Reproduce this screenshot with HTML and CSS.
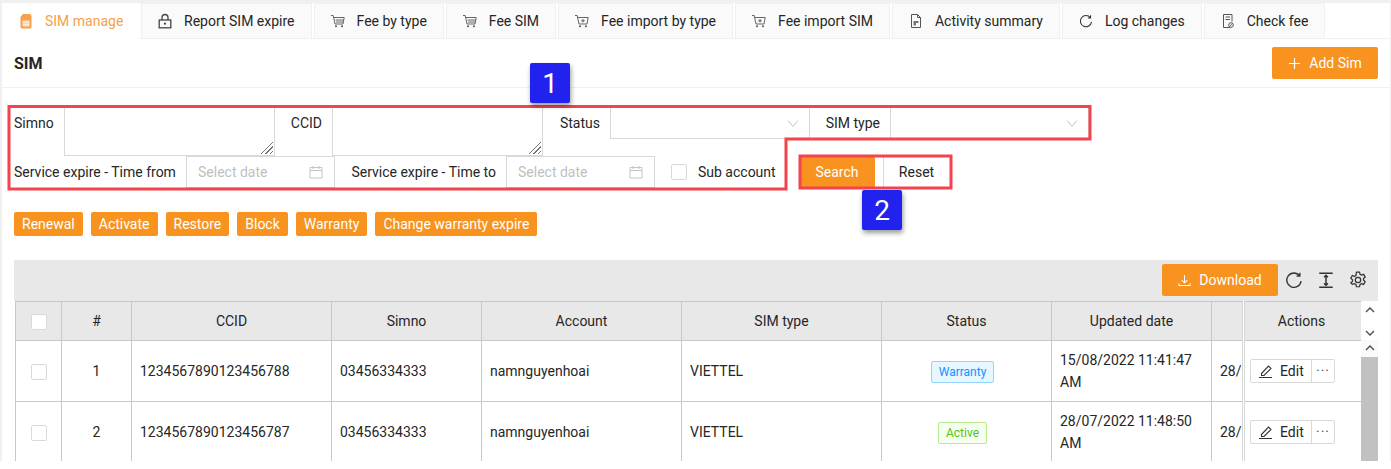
FILE: index.html
```html
<!DOCTYPE html>
<html lang="en">
<head>
    <meta charset="UTF-8">
    <title>SIM manage</title>
    <link rel="stylesheet" href="styles.css">
</head>
<body>
    <div class="page">
        <div class="tabs">
            <div class="tab active">
                <svg class="tab-icon" viewBox="0 0 14 16"><path d="M4 1h6.500a2 2 0 0 1 2 2v11a1.500 1.500 0 0 1-1.500 1.500H3A1.500 1.500 0 0 1 1.500 14V4z" fill="#f7a04a"/><path d="M4 8h6v5H4zM4 9.700h6M4 11.300h6M6 8v5M8 8v5" fill="none" stroke="#fff" stroke-width=".8"/></svg>
                SIM manage
            </div>
            <div class="tab">
                <svg class="tab-icon" viewBox="0 0 14 16"><path d="M4 7V4.500a3 3 0 0 1 6 0V7" fill="none" stroke="#444" stroke-width="1.300"/><rect x="1.200" y="7" width="11.600" height="7.800" fill="none" stroke="#444" stroke-width="1.300"/><circle cx="7" cy="10.700" r="1.100" fill="#444"/></svg>
                Report SIM expire
            </div>
            <div class="tab">
                <svg class="tab-icon" viewBox="0 0 14 16"><use href="#cart"/></svg>
                Fee by type
            </div>
            <div class="tab">
                <svg class="tab-icon" viewBox="0 0 14 16"><use href="#cart"/></svg>
                Fee SIM
            </div>
            <div class="tab">
                <svg class="tab-icon" viewBox="0 0 14 16"><use href="#cart-plus"/></svg>
                Fee import by type
            </div>
            <div class="tab">
                <svg class="tab-icon" viewBox="0 0 14 16"><use href="#cart-plus"/></svg>
                Fee import SIM
            </div>
            <div class="tab">
                <svg class="tab-icon" viewBox="0 0 14 16"><path d="M2.500 1.500h6l3 3v10h-9z" fill="none" stroke="#555" stroke-width="1"/><path d="M8.500 1.500v3h3" fill="none" stroke="#555"/><path d="M4.500 8h5v2h-2.500v2.500h-2.500z" fill="#777"/></svg>
                Activity summary
            </div>
            <div class="tab">
                <svg class="tab-icon" viewBox="0 0 16 16"><use href="#refresh"/></svg>
                Log changes
            </div>
            <div class="tab">
                <svg class="tab-icon" viewBox="0 0 14 16"><path d="M9 14.500H2.500v-13h8.500v7" fill="none" stroke="#555"/><path d="M4.500 4h4.500M4.500 6.500h4.500" stroke="#555"/><circle cx="10" cy="12" r="2.300" fill="none" stroke="#555"/><path d="M8.500 13.500l3-3" stroke="#555" stroke-width=".8"/></svg>
                Check fee
            </div>
        </div>

        <div class="title-bar">
            <h1 class="title">SIM</h1>
            <button class="btn btn-add">
                <svg class="btn-icon" viewBox="0 0 14 14"><path d="M7 1v12M1 7h12" stroke="#fff" stroke-width="1.300"/></svg>
                Add Sim
            </button>
        </div>

        <div class="filters">
            <div class="filter-row first">
                <label class="lbl lbl-simno">Simno</label>
                <div class="textarea"><span class="grip"></span></div>
                <label class="lbl lbl-ccid">CCID</label>
                <div class="textarea"><span class="grip"></span></div>
                <label class="lbl lbl-status">Status</label>
                <div class="select select-status"><svg class="chev" viewBox="0 0 12 12"><path d="M1 3.500l5 6 5-6" fill="none" stroke="#c4c4c4"/></svg></div>
                <label class="lbl lbl-type">SIM type</label>
                <div class="select select-type"><svg class="chev" viewBox="0 0 12 12"><path d="M1 3.500l5 6 5-6" fill="none" stroke="#c4c4c4"/></svg></div>
            </div>
            <div class="filter-row second">
                <label class="lbl lbl-from">Service expire - Time from</label>
                <div class="date">Select date <svg class="cal" viewBox="0 0 14 14"><path d="M1 2.500h12v10.500H1zM1 5.500h12M4 1v3M10 1v3" fill="none" stroke="#c4c4c4"/></svg></div>
                <label class="lbl lbl-to">Service expire - Time to</label>
                <div class="date">Select date <svg class="cal" viewBox="0 0 14 14"><path d="M1 2.500h12v10.500H1zM1 5.500h12M4 1v3M10 1v3" fill="none" stroke="#c4c4c4"/></svg></div>
                <span class="check sub-check"></span>
                <label class="lbl lbl-sub">Sub account</label>
                <button class="search">Search</button>
                <button class="reset">Reset</button>
            </div>
        </div>

        <div class="actions">
            <button class="btn-small">Renewal</button>
            <button class="btn-small">Activate</button>
            <button class="btn-small">Restore</button>
            <button class="btn-small">Block</button>
            <button class="btn-small">Warranty</button>
            <button class="btn-small">Change warranty expire</button>
        </div>

        <div class="grid">
            <div class="toolbar">
                <button class="btn btn-download">
                    <svg class="btn-icon" viewBox="0 0 14 14"><path d="M7 1v8M4 6.500L7 9.500l3-3M1 10v2.500h12V10" fill="none" stroke="#fff" stroke-width="1.100"/></svg>
                    Download
                </button>
                <svg class="tool" viewBox="0 0 16 16"><use href="#refresh"/></svg>
                <svg class="tool" viewBox="0 0 16 16"><path d="M2 2h12M2 14.500h12M8 4v8.500M6.300 5.500L8 3.800l1.700 1.700M6.300 11L8 12.700 9.700 11" fill="none" stroke="#333" stroke-width="1.300"/></svg>
                <svg class="tool" viewBox="0 0 16 16"><path d="M6.600 1h2.800l.4 2 1.300.7 1.900-.7 1.400 2.400-1.500 1.300v1.500l1.500 1.300-1.400 2.400-1.900-.7-1.300.8-.4 2H6.600l-.4-2-1.300-.8-1.900.7L1.600 10.500l1.500-1.300V7.700L1.600 6.400 3 4l1.900.7 1.300-.7z" fill="none" stroke="#333" stroke-width="1.100"/><circle cx="8" cy="8" r="2.400" fill="none" stroke="#333" stroke-width="1.100"/></svg>
            </div>
            <div class="table-wrap">
                <table class="table">
                    <colgroup>
                        <col class="c-check"><col class="c-num"><col class="c-ccid"><col class="c-simno"><col class="c-account"><col class="c-type"><col class="c-status"><col class="c-updated"><col class="c-extra"><col class="c-actions">
                    </colgroup>
                    <thead>
                        <tr>
                            <th><span class="check white"></span></th>
                            <th>#</th>
                            <th>CCID</th>
                            <th>Simno</th>
                            <th>Account</th>
                            <th>SIM type</th>
                            <th>Status</th>
                            <th>Updated date</th>
                            <th></th>
                            <th class="fixed">Actions</th>
                        </tr>
                    </thead>
                    <tbody>
                        <tr>
                            <td class="center"><span class="check"></span></td>
                            <td class="center">1</td>
                            <td>1234567890123456788</td>
                            <td>03456334333</td>
                            <td>namnguyenhoai</td>
                            <td>VIETTEL</td>
                            <td class="center"><span class="tag tag-blue">Warranty</span></td>
                            <td>15/08/2022 11:41:47 AM</td>
                            <td class="clip">28/</td>
                            <td class="fixed"><div class="row-btns"><span class="edit"><svg class="edit-icon" viewBox="0 0 14 14"><path d="M2.500 9.500L9.500 2l2.500 2.500L5 11.500H2.500zM0 13.500h13" fill="none" stroke="#333" stroke-width="1.100"/></svg>Edit</span><span class="more">···</span></div></td>
                        </tr>
                        <tr>
                            <td class="center"><span class="check"></span></td>
                            <td class="center">2</td>
                            <td>1234567890123456787</td>
                            <td>03456334333</td>
                            <td>namnguyenhoai</td>
                            <td>VIETTEL</td>
                            <td class="center"><span class="tag tag-green">Active</span></td>
                            <td>28/07/2022 11:48:50 AM</td>
                            <td class="clip">28/</td>
                            <td class="fixed"><div class="row-btns"><span class="edit"><svg class="edit-icon" viewBox="0 0 14 14"><path d="M2.500 9.500L9.500 2l2.500 2.500L5 11.500H2.500zM0 13.500h13" fill="none" stroke="#333" stroke-width="1.100"/></svg>Edit</span><span class="more">···</span></div></td>
                        </tr>
                    </tbody>
                </table>
                <div class="scroll">
                    <div class="scroll-head">
                        <svg class="arrow" viewBox="0 0 10 6"><path d="M1 5l4-4 4 4" fill="none" stroke="#555" stroke-width="1.500"/></svg>
                        <svg class="arrow" viewBox="0 0 10 6"><path d="M1 1l4 4 4-4" fill="none" stroke="#555" stroke-width="1.500"/></svg>
                    </div>
                    <div class="scroll-up"><svg class="arrow" viewBox="0 0 10 6"><path d="M1 5l4-4 4 4" fill="none" stroke="#555" stroke-width="1.500"/></svg></div>
                    <div class="scroll-thumb"></div>
                </div>
            </div>
        </div>
    </div>

    <!-- annotations drawn on top of the screenshot -->
    <svg class="notes" viewBox="0 0 1391 469">
        <path d="M9 106.500H1090V139H786V189H9z" fill="none" stroke="#f4434c" stroke-width="3"/>
        <rect x="800" y="156" width="151" height="32" fill="none" stroke="#f4434c" stroke-width="3"/>
    </svg>
    <div class="badge badge-one">1</div>
    <div class="badge badge-two">2</div>

    <svg class="defs" width="0" height="0">
        <defs>
            <g id="cart"><path d="M0 2.500h2.200l1.800 8.500h8l1.200-6.500H2.800M4.500 7h8M5 9h7" fill="none" stroke="#555" stroke-width=".9"/><circle cx="5" cy="13.300" r="1" fill="#555"/><circle cx="11" cy="13.300" r="1" fill="#555"/></g>
            <g id="cart-plus"><path d="M0 2.500h2.200l1.800 8.500h8l1.200-6.500H2.800M8 6v3.500M6.200 7.800h3.600" fill="none" stroke="#555" stroke-width=".9"/><circle cx="5" cy="13.300" r="1" fill="#555"/><circle cx="11" cy="13.300" r="1" fill="#555"/></g>
            <path id="refresh" d="M13 4.200A6.400 6.400 0 1 0 14.300 9M13.200 1.500v3h-3" fill="none" stroke="#333" stroke-width="1.200"/>
        </defs>
    </svg>
</body>
</html>
```

FILE: styles.css
```css
* {
    box-sizing: border-box;
}
html {
    margin: 0;
    height: 100%;
    overflow: hidden;
    background: #fff;
}
body {
    position: relative;
    margin: 0;
    height: 461px;
    background: #f0f0f0;
    padding: 3px 1px 0 2px;
    font-family: Roboto, "Liberation Sans", sans-serif;
    font-size: 14px;
    color: #262626;
}
.page {
    height: 100%;
    background: #fff;
}
button {
    font: inherit;
    border: 0;
    padding: 0;
    cursor: pointer;
}

/* tabs */
.tabs {
    display: flex;
    gap: 2px;
    height: 36px;
    border-bottom: 1px solid #f0f0f0;
}
.tab {
    display: flex;
    align-items: center;
    gap: 12px;
    height: 35px;
    padding: 0 16px;
    background: #fafafa;
    border: 1px solid #f0f0f0;
    border-bottom: 0;
    white-space: nowrap;
}
.tab.active {
    height: 36px;
    width: 137px;
    padding: 0 0 1px 16px;
    background: #fff;
    border-color: #fff;
    color: #f7a04a;
}
.tab-icon {
    width: 14px;
    height: 16px;
    flex: none;
}

/* title */
.title-bar {
    display: flex;
    justify-content: space-between;
    align-items: center;
    height: 49px;
    padding: 0 12px;
    border-bottom: 1px solid #f0f0f0;
}
.title {
    margin: 0;
    font-size: 16px;
    font-weight: 700;
}
.btn {
    display: flex;
    align-items: center;
    justify-content: center;
    gap: 8px;
    height: 32px;
    background: #f7931e;
    color: #fff;
    border-radius: 2px;
}
.btn-add {
    width: 106px;
}
.btn-download {
    width: 116px;
}
.btn-icon {
    width: 13px;
    height: 13px;
}

/* search form */
.filters {
    padding: 20px 0 0 12px;
    height: 124px;
}
.filter-row {
    display: flex;
}
.filter-row.first {
    height: 48px;
    align-items: flex-start;
}
.filter-row.second {
    height: 32px;
    align-items: stretch;
}
.lbl {
    white-space: nowrap;
    flex: none;
}
.first .lbl {
    line-height: 31px;
}
.second .lbl {
    line-height: 32px;
}
.lbl-simno { width: 50px; }
.lbl-ccid { width: 57px; text-align: right; padding-right: 10px; }
.lbl-status { width: 67px; text-align: right; padding-right: 10px; }
.lbl-type { width: 80px; text-align: right; padding-right: 10px; }
.lbl-from { width: 172px; }
.lbl-to { width: 171px; text-align: right; padding-right: 10px; }
.lbl-sub { width: 88px; padding-left: 11px; }
.textarea {
    position: relative;
    width: 211px;
    height: 48px;
    border: 1px solid #d9d9d9;
    border-top: 0;
}
.grip {
    position: absolute;
    right: 1px;
    bottom: 1px;
    width: 14px;
    height: 14px;
    background: repeating-linear-gradient(135deg, transparent 0 2px, #777 2px 3px);
    clip-path: polygon(100% 0, 100% 100%, 0 100%);
}
.select {
    position: relative;
    height: 31px;
    border: 1px solid #d9d9d9;
    border-top: 0;
}
.select-status { width: 200px; }
.select-type { width: 199px; }
.chev {
    position: absolute;
    right: 10px;
    top: 9px;
    width: 12px;
    height: 12px;
}
.date {
    display: flex;
    align-items: center;
    justify-content: space-between;
    width: 149px;
    padding: 0 11px;
    border: 1px solid #d9d9d9;
    color: #bfbfbf;
}
.cal {
    width: 14px;
    height: 14px;
}
.check {
    display: inline-block;
    width: 16px;
    height: 16px;
    background: #fff;
    border: 1px solid #d9d9d9;
    border-radius: 2px;
    vertical-align: middle;
}
.sub-check {
    align-self: center;
    margin-left: 16px;
}
.search {
    width: 74px;
    margin-left: 26px;
    padding-right: 2px;
    background: #f7931e;
    color: #fff;
    height: 30px;
    align-self: center;
}
.reset {
    width: 66px;
    margin-left: 8px;
    background: #fff;
    color: #262626;
    border-left: 1px solid #d9d9d9;
    height: 30px;
    align-self: center;
}

/* bulk buttons */
.actions {
    display: flex;
    gap: 8px;
    height: 48px;
    padding-left: 12px;
}
.btn-small {
    height: 24px;
    padding: 0 8px;
    background: #f7931e;
    color: #fff;
    border-radius: 2px;
}

/* table */
.grid {
    margin: 0 12px;
}
.toolbar {
    display: flex;
    align-items: center;
    justify-content: flex-end;
    height: 41px;
    padding: 0 4px 1px 0;
    background: #e8e8e8;
}
.tool {
    width: 18px;
    height: 18px;
    margin: 0 7px;
    flex: none;
}
.table-wrap {
    position: relative;
    height: 160px;
    padding-left: 1px;
    overflow: hidden;
}
.table {
    table-layout: fixed;
    border-collapse: collapse;
    width: 1346px;
}
.c-check { width: 46px; }
.c-num { width: 70px; }
.c-ccid { width: 200px; }
.c-simno { width: 150px; }
.c-account { width: 200px; }
.c-type { width: 200px; }
.c-status { width: 170px; }
.c-updated { width: 160px; }
.c-extra { width: 32px; }
.c-actions { width: 118px; }
.table th, .table td {
    border: 1px solid #c8c8c8;
    padding: 0 8px;
    line-height: 22px;
    overflow: hidden;
}
.table th {
    height: 39px;
    background: #e8e8e8;
    font-weight: 400;
    text-align: center;
}
.table td {
    height: 61px;
}
.table .center {
    text-align: center;
}
.table .clip {
    white-space: nowrap;
    padding-right: 0;
}
.table .fixed {
    border-left: 3px double #d8d8d8;
    padding-left: 5px;
}
.tag {
    display: inline-block;
    margin-right: 8px;
    padding: 0 7px;
    font-size: 12px;
    line-height: 20px;
    border: 1px solid;
    border-radius: 2px;
}
.tag-blue {
    color: #1890ff;
    background: #e6f7ff;
    border-color: #91d5ff;
}
.tag-green {
    color: #52c41a;
    background: #f6ffed;
    border-color: #b7eb8f;
}
.row-btns {
    display: flex;
    height: 24px;
    width: 85px;
    border: 1px solid #d9d9d9;
    border-radius: 2px;
    align-items: center;
}
.edit {
    display: flex;
    align-items: center;
    gap: 7px;
    width: 61px;
    height: 100%;
    padding-left: 8px;
    border-right: 1px solid #d9d9d9;
}
.edit-icon {
    width: 14px;
    height: 14px;
}
.more {
    flex: 1;
    text-align: center;
    letter-spacing: 1px;
    color: #555;
}
.scroll {
    position: absolute;
    top: 0;
    right: 0;
    width: 17px;
    height: 160px;
    display: flex;
    flex-direction: column;
}
.scroll-head {
    display: flex;
    flex-direction: column;
    align-items: center;
    justify-content: space-between;
    height: 39px;
    padding: 6px 0 4px;
    background: #fff;
}
.scroll-up {
    display: flex;
    justify-content: center;
    padding-top: 5px;
    height: 17px;
    background: #fafafa;
}
.scroll-thumb {
    flex: 1;
    background: #c1c1c1;
}
.arrow {
    width: 10px;
    height: 6px;
}

/* blue numbered badges and red frames from the annotated screenshot */
.notes {
    position: absolute;
    left: 0;
    top: 0;
    width: 1391px;
    height: 469px;
    pointer-events: none;
}
.badge {
    position: absolute;
    display: flex;
    align-items: center;
    justify-content: center;
    width: 40px;
    height: 40px;
    background: #2222ee;
    color: #fff;
    font-size: 28px;
    border-radius: 2px;
    box-shadow: 1px 3px 5px rgba(0,0,0,0.4);
}
.badge-one {
    left: 530px;
    top: 63px;
}
.badge-two {
    left: 862px;
    top: 190px;
}
.defs {
    position: absolute;
}
```
